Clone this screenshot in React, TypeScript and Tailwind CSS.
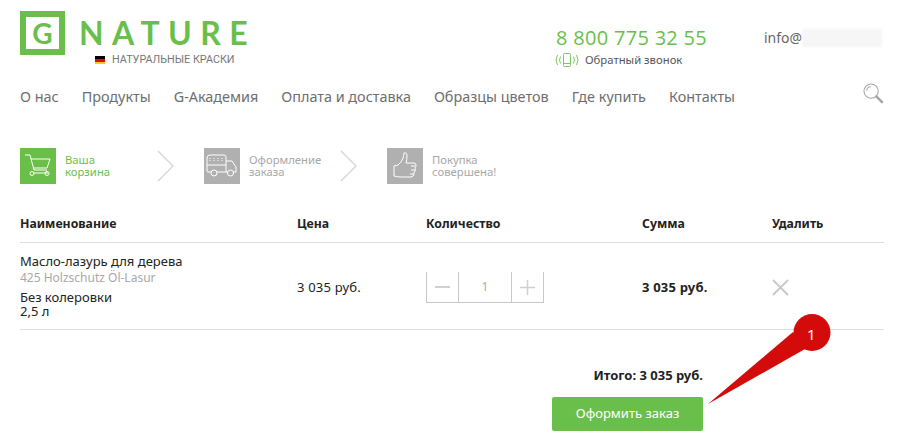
const NAV = ["О нас", "Продукты", "G-Академия", "Оплата и доставка", "Образцы цветов", "Где купить", "Контакты"];

function Chevron() {
  return (
    <svg width="18" height="32" viewBox="0 0 18 32" fill="none" stroke="#d4d4d4" strokeWidth="1.3">
      <path d="M1 1l15 15L1 31" />
    </svg>
  );
}

function CartIcon() {
  return (
    <svg width="28" height="26" viewBox="0 0 28 26" fill="none" stroke="#fff" strokeWidth="1">
      <path d="M1 2h5l4 15h13" />
      <path d="M7 6h19l-3 9H10" />
      <path d="M9 20h15" />
      <circle cx="8" cy="20.500" r="2" />
      <circle cx="23" cy="20.500" r="2" />
    </svg>
  );
}

function TruckIcon() {
  return (
    <svg width="32" height="24" viewBox="0 0 32 24" fill="none" stroke="#fff" strokeWidth="1">
      <path d="M5 18H2a1 1 0 0 1-1-1V4q0-3 3-3h14q2 0 2 2v15h-9" />
      <path d="M1 11h19" />
      <path d="M4 4v3M8 4v3M12 4v3M16 4v3" strokeDasharray="1 1" />
      <path d="M20 7h6l4 6v5h-3M20 18h2" />
      <circle cx="8" cy="19" r="3" />
      <circle cx="24.500" cy="19" r="3" />
    </svg>
  );
}

function ThumbIcon() {
  return (
    <svg width="24" height="28" viewBox="0 0 24 28" fill="none" stroke="#fff" strokeWidth="1">
      <path d="M1 14l4-1q4-3 5-7 1-3 1-5 3-1 3 3 0 4-1 7h8q2 0 2 2 0 2-1 3 1 2 0 3-1 1-1 2 0 2-1 3-1 1-2 1H8q-4 0-7-1z" />
      <path d="M18 14h4M18 18h4M17 22h4" />
    </svg>
  );
}

function Step({ active, icon, lines }: { active?: boolean; icon: React.ReactNode; lines: [string, string] }) {
  return (
    <div className="flex items-center">
      <div className={`flex h-9 w-9 items-center justify-center ${active ? "bg-[#6abf4b]" : "bg-[#b0b0b0]"}`}>
        {icon}
      </div>
      <div className={`ml-[9px] text-[11.300px] leading-[12px] ${active ? "text-[#6abf4b]" : "text-[#a8a8a8]"}`}>
        {lines[0]}
        <br />
        {lines[1]}
      </div>
    </div>
  );
}

export default function App() {
  return (
    <div className="relative h-[433px] w-[917px] overflow-hidden bg-white pl-5 pr-[33px] pt-[11px] font-['Noto_Sans',sans-serif] text-[#222]">
      {/* header */}
      <div className="flex h-[57px] items-start">
        <div className="w-[536px]">
          <div className="flex h-[44px] items-center">
            <div className="flex h-[44px] w-[45px] items-center justify-center border-[6px] border-[#6abf4b] font-['Lato',sans-serif] text-[28px] font-bold leading-none text-[#6abf4b]">
              G
            </div>
            <div className="ml-[14px] font-['Lato',sans-serif] text-[32px] font-bold leading-none tracking-[8.400px] text-[#6abf4b]">
              NATURE
            </div>
          </div>
          <div className="ml-[75px] mt-[-1px] flex h-[12px] items-center">
            <div className="flex h-[8px] w-[10px] flex-col">
              <div className="h-[3px] bg-black" />
              <div className="h-[3px] bg-[#d8110f]" />
              <div className="h-[2px] bg-[#f8ca1c]" />
            </div>
            <div className="ml-[7px] font-['Roboto',sans-serif] text-[10.800px] text-[#777]">НАТУРАЛЬНЫЕ КРАСКИ</div>
          </div>
        </div>
        <div className="w-[208px] pt-[15px]">
          <div className="font-['Open_Sans',sans-serif] text-[20px] leading-[24px] tracking-[0.300px] text-[#6abf4b]">8 800 775 32 55</div>
          <div className="mt-[3px] flex items-center">
            <svg className="ml-[-1px]" width="24" height="14" viewBox="0 0 24 14" fill="none" stroke="#7cc862" strokeWidth="1">
              <rect x="8.500" y="0.500" width="7" height="13" rx="1" />
              <path d="M8.500 10.500h7" />
              <path d="M5.500 3.500q-2 3.500 0 7M2.500 2q-3 5 0 10M18.500 3.500q2 3.500 0 7M21.500 2q3 5 0 10" />
            </svg>
            <span className="ml-[6px] text-[11.300px] leading-[14px] text-[#555]">Обратный звонок</span>
          </div>
        </div>
        <div className="flex items-center pt-[16px]">
          <span className="text-[14px] leading-[22px] text-[#666]">info@</span>
          <div className="h-[18px] w-[80px] bg-[#f6f6f6] blur-[1px]" />
        </div>
      </div>

      {/* nav */}
      <div className="mt-[18px] flex h-[22px] items-center justify-between">
        <div className="flex gap-[23px] text-[14.400px] text-[#6e6e6e]">
          {NAV.map((n) => (
            <span key={n}>{n}</span>
          ))}
        </div>
        <svg className="mb-[8px]" width="21" height="21" viewBox="0 0 22 22" fill="none" stroke="#a4a4a4" strokeWidth="1.1">
          <circle cx="8.500" cy="8.500" r="7.500" />
          <path d="M4 8q0-4 4-4" />
          <path d="M14 14l6 6" strokeWidth="2.500" strokeLinecap="round" />
        </svg>
      </div>

      {/* steps */}
      <div className="mt-[40px] flex h-9 items-center">
        <div className="w-[137px]">
          <Step active icon={<CartIcon />} lines={["Ваша", "корзина"]} />
        </div>
        <div className="w-[47px]">
          <Chevron />
        </div>
        <div className="w-[136px]">
          <Step icon={<TruckIcon />} lines={["Оформление", "заказа"]} />
        </div>
        <div className="w-[47px]">
          <Chevron />
        </div>
        <Step icon={<ThumbIcon />} lines={["Покупка", "совершена!"]} />
      </div>

      {/* table */}
      <div className="mt-[25px] grid h-[34px] grid-cols-[277px_129px_216px_130px_1fr] items-center border-b border-[#dedede] pb-[2px] text-[12.300px] font-bold">
        <div>Наименование</div>
        <div>Цена</div>
        <div>Количество</div>
        <div>Сумма</div>
        <div>Удалить</div>
      </div>
      <div className="grid h-[87px] grid-cols-[277px_129px_216px_130px_1fr] items-center border-b border-[#dedede] text-[13px]">
        <div className="pb-[2px]">
          <div className="leading-[17px]">Масло-лазурь для дерева</div>
          <div className="text-[12px] leading-[15px] text-[#a8a8a8]">425 Holzschutz Öl-Lasur</div>
          <div className="mt-[5px] leading-[14px]">
            Без колеровки
            <br />
            2,5 л
          </div>
        </div>
        <div className="pt-[3px] tracking-[0.200px]">3 035 руб.</div>
        <div className="mt-[3px] flex h-[31px] w-[118px] border-x border-b border-[#c8c8c8] text-[#aaa]">
          <div className="flex w-[32px] items-center justify-center border-r border-[#c8c8c8]">
            <div className="h-[2px] w-[15px] bg-[#d0d0d0]" />
          </div>
          <div className="flex flex-1 items-center justify-center text-[12px]">1</div>
          <div className="flex w-[32px] items-center justify-center border-l border-[#c8c8c8]">
            <svg width="15" height="15" viewBox="0 0 15 15" stroke="#d0d0d0" strokeWidth="1.5">
              <path d="M7.500 0v15M0 7.500h15" />
            </svg>
          </div>
        </div>
        <div className="pt-[3px] font-bold tracking-[0.200px]">3 035 руб.</div>
        <div className="pt-[3px]">
          <svg width="17" height="17" viewBox="0 0 17 17" stroke="#c8c8c8" strokeWidth="1.8">
            <path d="M1 1l15 15M16 1L1 16" />
          </svg>
        </div>
      </div>

      {/* total */}
      <div className="flex flex-col items-end pr-[181px]">
        <div className="mt-[36px] text-[13px] font-bold leading-[18px]">Итого: 3 035 руб.</div>
        <div className="mt-[13px] flex h-[34px] w-[151px] items-center justify-center rounded-[2px] bg-[#6abf4b] text-[13px] text-white">
          Оформить заказ
        </div>
      </div>

      {/* red callout */}
      <div className="absolute left-[700px] top-[310px]">
        <svg width="135" height="100" viewBox="0 0 135 100">
          <path d="M8 94L93 22l12 17z" fill="#d40b0b" />
          <circle cx="112" cy="22.500" r="18.500" fill="#d40b0b" />
        </svg>
        <span className="absolute left-[107px] top-[14px] text-[15px] leading-[20px] text-white">1</span>
      </div>
    </div>
  );
}
